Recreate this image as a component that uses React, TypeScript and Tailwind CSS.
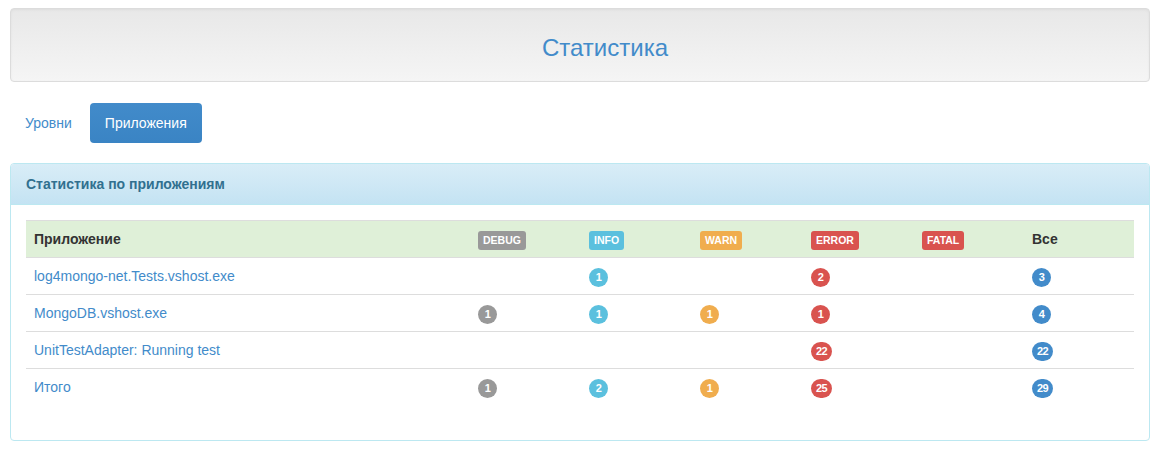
import React from 'react'

type Level = 'debug' | 'info' | 'warn' | 'error' | 'fatal' | 'all'

const labelCls: Record<Level, string> = {
  debug: 'bg-[#999999]',
  info: 'bg-[#5bc0de]',
  warn: 'bg-[#f0ad4e]',
  error: 'bg-[#d9534f]',
  fatal: 'bg-[#d9534f]',
  all: 'bg-[#428bca]',
}

const levels: { key: Level; title: string }[] = [
  { key: 'debug', title: 'DEBUG' },
  { key: 'info', title: 'INFO' },
  { key: 'warn', title: 'WARN' },
  { key: 'error', title: 'ERROR' },
  { key: 'fatal', title: 'FATAL' },
]

type Row = { name: string; counts: Partial<Record<Level, number>> }

const rows: Row[] = [
  { name: 'log4mongo-net.Tests.vshost.exe', counts: { info: 1, error: 2, all: 3 } },
  { name: 'MongoDB.vshost.exe', counts: { debug: 1, info: 1, warn: 1, error: 1, all: 4 } },
  { name: 'UnitTestAdapter: Running test', counts: { error: 22, all: 22 } },
  { name: 'Итого', counts: { debug: 1, info: 2, warn: 1, error: 25, all: 29 } },
]

function Badge({ level, value }: { level: Level; value?: number }) {
  if (value === undefined) return null
  return (
    <span
      className={`inline-flex h-[19px] min-w-[19px] items-center justify-center rounded-[10px] px-[5px] text-[11px] font-bold leading-none tracking-[-0.5px] text-white ${labelCls[level]}`}
    >
      {value}
    </span>
  )
}

export default function App() {
  return (
    <div className="min-h-[450px] bg-white pl-[10px] pr-[12px] pt-[8px] font-['Liberation_Sans',Arial,sans-serif] text-[14px] text-[#333333]">
      {/* header well */}
      <div className="flex h-[74px] items-center justify-center rounded-[4px] border border-[#dcdcdc] bg-gradient-to-b from-[#e8e8e8] to-[#f5f5f5] pl-[50px] pt-[5px] shadow-[inset_0_1px_3px_rgba(0,0,0,0.05)]">
        <h1 className="text-[24px] font-normal text-[#428bca]">Статистика</h1>
      </div>

      {/* nav pills */}
      <ul className="mt-[21px] flex gap-[3px]">
        <li>
          <a className="block px-[15px] py-[10px] leading-[20px] text-[#428bca]">Уровни</a>
        </li>
        <li>
          <a className="block rounded-[4px] bg-gradient-to-b from-[#428bca] to-[#3a84c4] px-[15px] py-[10px] leading-[20px] text-white">
            Приложения
          </a>
        </li>
      </ul>

      {/* panel */}
      <div className="mt-[20px] rounded-[4px] border border-[#bce8f1]">
        <div className="rounded-t-[3px] border-b border-[#bce8f1] bg-gradient-to-b from-[#d9edf7] to-[#c4e3f3] px-[15px] py-[10px]">
          <h3 className="text-[14px] font-bold leading-[20px] text-[#31708f]">Статистика по приложениям</h3>
        </div>
        <div className="p-[15px]">
          <table className="mb-[5px] w-full table-fixed border-collapse">
            <colgroup>
              <col className="w-[444px]" />
              <col className="w-[111px]" />
              <col className="w-[111px]" />
              <col className="w-[111px]" />
              <col className="w-[111px]" />
              <col className="w-[110px]" />
              <col className="w-[110px]" />
            </colgroup>
            <thead>
              <tr className="border-t border-[#dddddd] bg-[#dff0d8]">
                <th className="h-[37px] px-[8px] text-left font-bold leading-[20px]">Приложение</th>
                {levels.map((l) => (
                  <th key={l.key} className="px-[8px] text-left">
                    <span
                      className={`inline-block rounded-[3px] px-[5px] text-[10.5px] font-bold leading-[19px] text-white ${labelCls[l.key]}`}
                    >
                      {l.title}
                    </span>
                  </th>
                ))}
                <th className="px-[8px] text-left font-bold leading-[20px]">Все</th>
              </tr>
            </thead>
            <tbody>
              {rows.map((r) => (
                <tr key={r.name} className="border-t border-[#dddddd]">
                  <td className="h-[37px] px-[8px] leading-[20px]">
                    <a className="text-[#428bca]">{r.name}</a>
                  </td>
                  {levels.map((l) => (
                    <td key={l.key} className="px-[8px] align-middle">
                      <Badge level={l.key} value={r.counts[l.key]} />
                    </td>
                  ))}
                  <td className="px-[8px] align-middle">
                    <Badge level="all" value={r.counts.all} />
                  </td>
                </tr>
              ))}
            </tbody>
          </table>
          <div className="h-[14px]" />
        </div>
      </div>
    </div>
  )
}
